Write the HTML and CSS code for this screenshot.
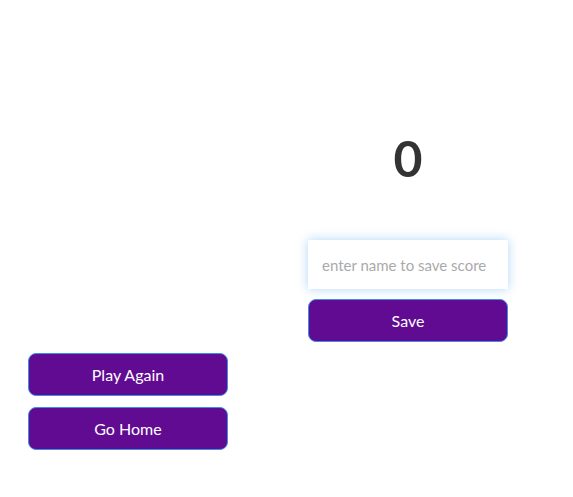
FILE: index.html
```html
<!DOCTYPE html>
<html>
<head>
<meta charset="utf-8">
<link rel="stylesheet" href="styles.css">
</head>
<body>
<div class="page">
  <div class="result">
    <h1 class="score">0</h1>
    <input class="name-input" type="text" placeholder="enter name to save score">
    <button class="btn">Save</button>
  </div>
  <div class="actions">
    <button class="btn">Play Again</button>
    <button class="btn">Go Home</button>
  </div>
</div>
</body>
</html>
```
FILE: styles.css
```css
html, body {
  margin: 0;
  padding: 0;
  background: #fff;
}
body {
  font-family: Lato, "Open Sans", sans-serif;
}
.page {
  padding: 118px 0 0 28px;
  display: flex;
  flex-direction: column;
  gap: 11px;
}
.result {
  margin-left: 280px;
  width: 200px;
  display: flex;
  flex-direction: column;
  align-items: center;
}
.score {
  margin: 0;
  font-size: 50px;
  line-height: 80px;
  font-weight: 700;
  color: #333;
  height: 80px;
}
.name-input {
  margin-top: 42px;
  box-sizing: border-box;
  width: 200px;
  height: 49px;
  border: none;
  outline: none;
  padding: 0 14px;
  font-family: Lato, "Open Sans", sans-serif;
  font-size: 15px;
  color: #333;
  background: #fff;
  box-shadow: 0 0 10px rgba(80, 165, 235, 0.45);
}
.name-input::placeholder {
  color: #aaa;
}
.result .btn {
  margin-top: 10px;
}
.actions {
  display: flex;
  flex-direction: column;
  gap: 11px;
}
.btn {
  box-sizing: border-box;
  width: 200px;
  height: 43px;
  border: 1px solid #3f8ee6;
  border-radius: 8px;
  background: #610b93;
  color: #fff;
  font-family: Lato, "Open Sans", sans-serif;
  font-size: 16px;
  cursor: pointer;
}
```
